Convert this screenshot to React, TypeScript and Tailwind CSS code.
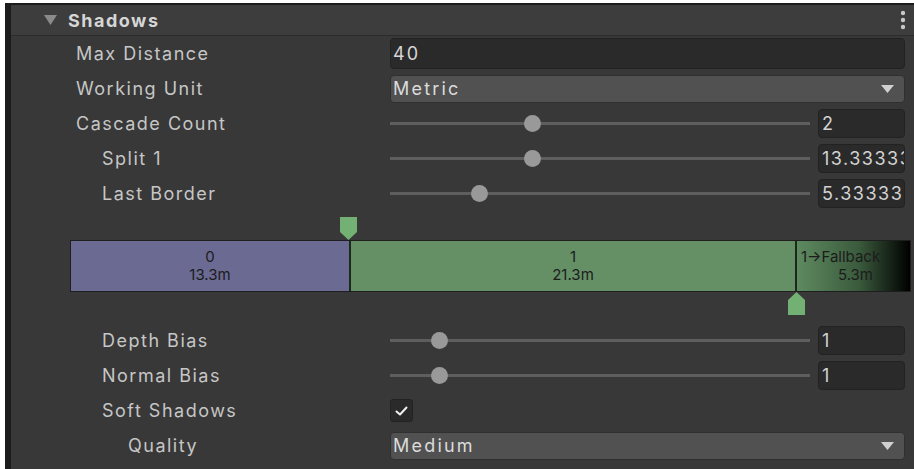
const FONT = { fontFamily: 'Inter, "Noto Sans", sans-serif' }

function Label({ text, indent }: { text: string; indent: number }) {
  const pad = indent === 0 ? 'pl-[65px]' : indent === 1 ? 'pl-[91px]' : 'pl-[117px]'
  return <div className={`w-[379px] shrink-0 ${pad} text-[18px] tracking-[1.5px] text-[#c6c6c6]`}>{text}</div>
}

function Slider({ pos, value }: { pos: number; value: string }) {
  return (
    <div className="flex min-w-0 flex-1 items-center">
      <div className="relative h-[3px] w-[420px] shrink-0 bg-[#5e5e5e]">
        <div className="absolute top-[-7px] h-[17px] w-[17px] rounded-full bg-[#999999]" style={{ left: pos - 8.5 }} />
      </div>
      <div className="ml-[8px] flex h-[29px] min-w-0 flex-1 items-center overflow-hidden whitespace-nowrap rounded-[4px] border border-[#222] bg-[#2a2a2a] pl-[3px] text-[18px] tracking-[1.5px] text-[#d2d2d2]">
        {value}
      </div>
    </div>
  )
}

function Dropdown({ value }: { value: string }) {
  return (
    <div className="flex h-[28px] flex-1 items-center justify-between rounded-[4px] border border-[#303030] bg-[#515151] pl-[2px] pr-[10px] text-[18px] tracking-[2.2px] text-[#dcdcdc]">
      <span>{value}</span>
      <svg width="13" height="8" viewBox="0 0 13 8"><path d="M0 0 H13 L6.5 8 Z" fill="#d0d0d0" /></svg>
    </div>
  )
}

function Row({ children }: { children: React.ReactNode }) {
  return <div className="flex h-[35px] items-center pr-[9px]">{children}</div>
}

function Marker({ up }: { up?: boolean }) {
  return (
    <svg width="17" height="23" viewBox="0 0 17 23">
      {up ? <path d="M8.5 0 L17 8 V23 H0 V8 Z" fill="#73b073" /> : <path d="M0 0 H17 V15 L8.5 23 L0 15 Z" fill="#73b073" />}
    </svg>
  )
}

export default function App() {
  return (
    <div className="h-[469px] w-[914px] overflow-hidden bg-white pl-[5px] pt-[3px]" style={FONT}>
      <div className="h-full border-l-[6px] border-t-[2px] border-[#1c1c1c] bg-[#383838]">
        <div className="flex h-[31px] items-center border-b border-[#2c2c2c] bg-[#3d3d3d] pr-[8px]">
          <svg className="ml-[33px]" width="13" height="10" viewBox="0 0 13 10"><path d="M0 0 H13 L6.5 10 Z" fill="#8a8a8a" /></svg>
          <span className="ml-[11px] flex-1 text-[18px] font-bold tracking-[1.5px] text-[#d6d6d6]">Shadows</span>
          <svg width="6" height="20" viewBox="0 0 6 20">
            <circle cx="3" cy="3" r="2.2" fill="#c8c8c8" />
            <circle cx="3" cy="10" r="2.2" fill="#c8c8c8" />
            <circle cx="3" cy="17" r="2.2" fill="#c8c8c8" />
          </svg>
        </div>

        <Row>
          <Label text="Max Distance" indent={0} />
          <div className="flex h-[31px] flex-1 items-center rounded-[4px] border border-[#222] bg-[#2a2a2a] pl-[2px] text-[18px] tracking-[2px] text-[#d6d6d6]">40</div>
        </Row>
        <Row>
          <Label text="Working Unit" indent={0} />
          <Dropdown value="Metric" />
        </Row>
        <Row>
          <Label text="Cascade Count" indent={0} />
          <Slider pos={142} value="2" />
        </Row>
        <Row>
          <Label text="Split 1" indent={1} />
          <Slider pos={142} value="13.33333" />
        </Row>
        <Row>
          <Label text="Last Border" indent={1} />
          <Slider pos={89} value="5.333333" />
        </Row>

        <div className="flex h-[29px] items-end pl-[329px] pt-[1px]">
          <Marker />
        </div>
        <div className="mr-[3px] ml-[59px] flex h-[52px] border border-[#1e1e1e] text-[15px] leading-[18px] text-[#1c1c1c]">
          <div className="flex w-[278px] flex-col items-center justify-center bg-[#6a6a93]">
            <span>0</span>
            <span>13.3m</span>
          </div>
          <div className="flex w-[446px] flex-col items-center justify-center border-l-2 border-[#1c2a1c] bg-[#659066]">
            <span>1</span>
            <span>21.3m</span>
          </div>
          <div className="flex min-w-0 flex-1 flex-col items-center justify-center overflow-hidden whitespace-nowrap border-l-2 border-[#1c2a1c] bg-[linear-gradient(90deg,#5e8a60_0%,#3a5a3c_55%,#000_100%)] pl-[4px]">
            <span className="self-start">1→Fallback</span>
            <span>5.3m</span>
          </div>
        </div>
        <div className="h-[31px] pl-[777px]">
          <Marker up />
        </div>

        <Row>
          <Label text="Depth Bias" indent={1} />
          <Slider pos={49} value="1" />
        </Row>
        <Row>
          <Label text="Normal Bias" indent={1} />
          <Slider pos={49} value="1" />
        </Row>
        <Row>
          <Label text="Soft Shadows" indent={1} />
          <div className="flex h-[23px] w-[23px] items-center justify-center rounded-[3px] border border-[#222] bg-[#2a2a2a]">
            <svg width="13" height="10" viewBox="0 0 13 10"><path d="M1.5 5.5 L5 8.5 L11.5 1.5" fill="none" stroke="#f0f0f0" strokeWidth="2" strokeLinecap="round" strokeLinejoin="round" /></svg>
          </div>
        </Row>
        <Row>
          <Label text="Quality" indent={2} />
          <Dropdown value="Medium" />
        </Row>
      </div>
    </div>
  )
}
